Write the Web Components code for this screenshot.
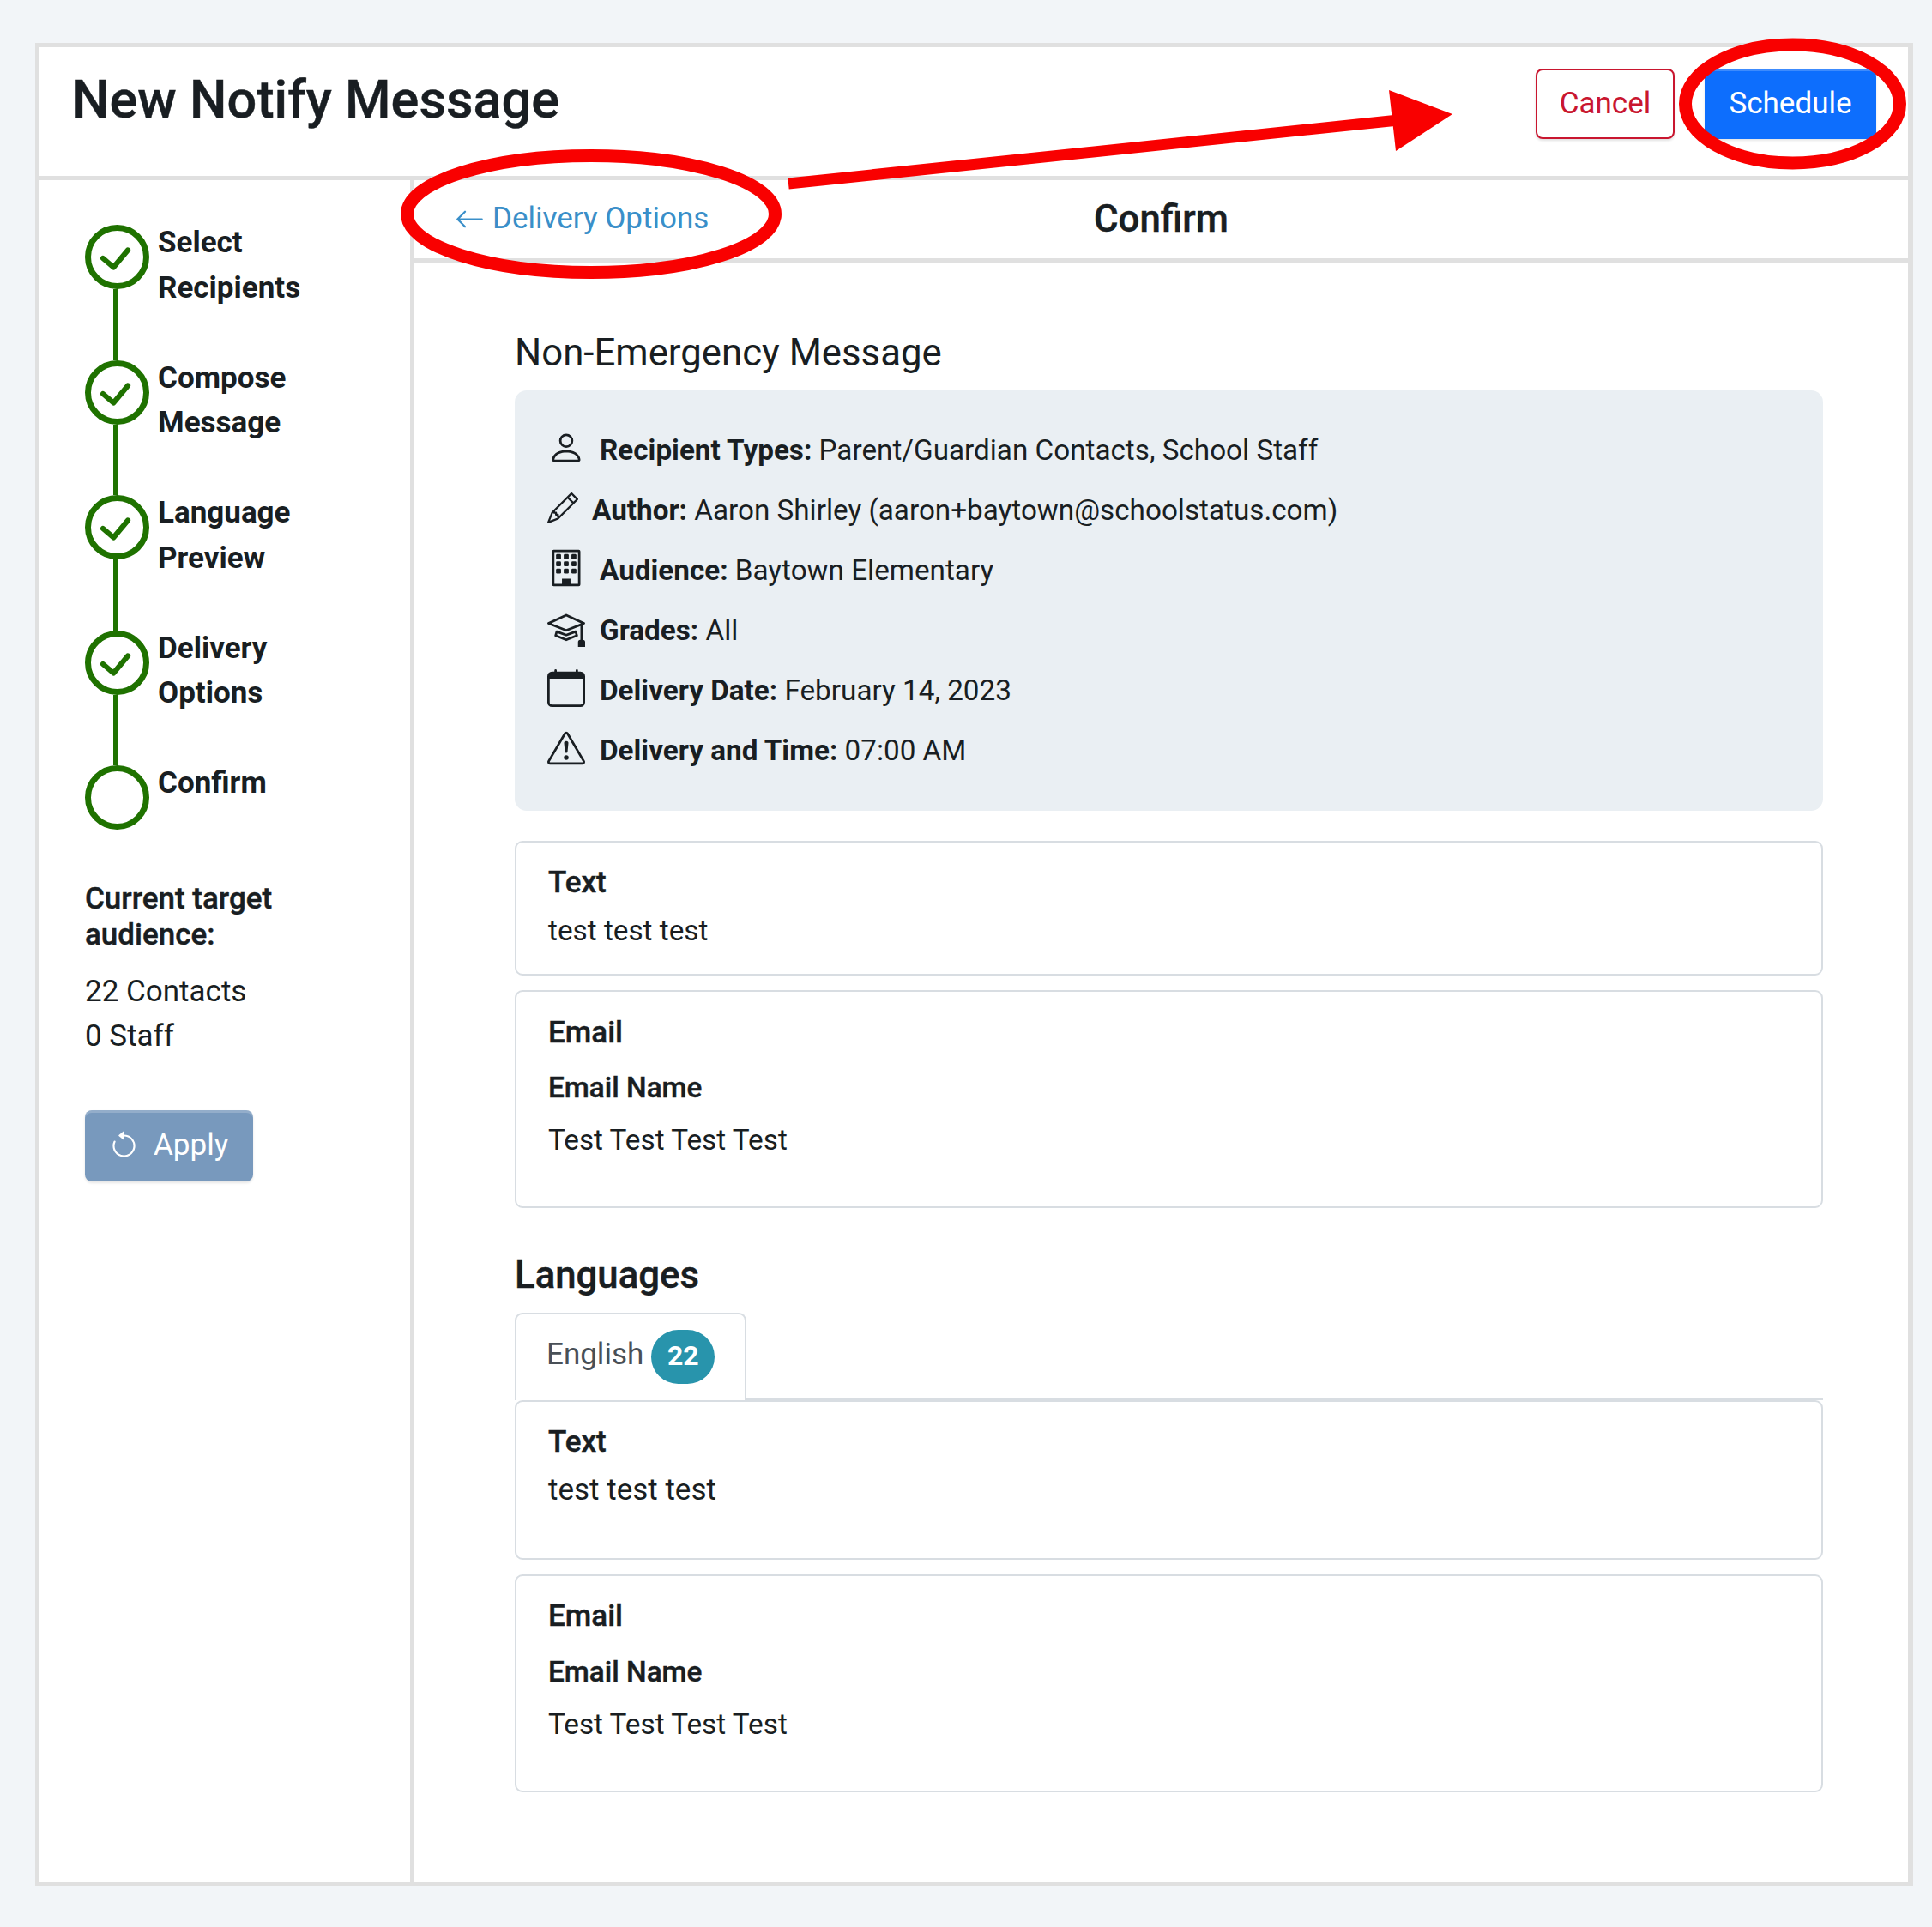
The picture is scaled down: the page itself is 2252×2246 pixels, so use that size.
<!DOCTYPE html>
<html lang="en"><head><meta charset="utf-8"><title>New Notify Message</title>
<style>
html,body{margin:0;padding:0;background:#f2f5f8;}
body{font-family:Roboto,"Liberation Sans",sans-serif;font-size:35px;line-height:52.5px;color:#191e22;}
</style></head><body>
<nm-app>
  <nm-header slot="header" heading="New Notify Message"></nm-header>
  <nm-sidebar slot="sidebar">
    <nm-step done>Select<br>Recipients</nm-step>
    <nm-step done>Compose<br>Message</nm-step>
    <nm-step done>Language<br>Preview</nm-step>
    <nm-step done>Delivery<br>Options</nm-step>
    <nm-step last>Confirm</nm-step>
  </nm-sidebar>
  <nm-subheader slot="sub" back="Delivery Options" heading="Confirm"></nm-subheader>
  <nm-content slot="content">
    <nm-title>Non-Emergency Message</nm-title>
    <nm-info>
      <nm-row icon="person"><b>Recipient Types:</b> Parent/Guardian Contacts, School Staff</nm-row>
      <nm-row icon="pencil"><b>Author:</b> Aaron Shirley (aaron+baytown@schoolstatus.com)</nm-row>
      <nm-row icon="building"><b>Audience:</b> Baytown Elementary</nm-row>
      <nm-row icon="grad"><b>Grades:</b> All</nm-row>
      <nm-row icon="calendar"><b>Delivery Date:</b> February 14, 2023</nm-row>
      <nm-row icon="warn"><b>Delivery and Time:</b> 07:00 AM</nm-row>
    </nm-info>
    <nm-card kind="text" small heading="Text" body="test test test" h="157" pad="21"></nm-card>
    <nm-card kind="email" heading="Email" name="Email Name" body="Test Test Test Test" h="254" gap="12" pad="21.500"></nm-card>
    <nm-langs></nm-langs>
    <nm-card kind="text" heading="Text" body="test test test" h="186" pad="21"></nm-card>
    <nm-card kind="email" heading="Email" name="Email Name" body="Test Test Test Test" h="254" gap="13" pad="20.500"></nm-card>
  </nm-content>
  <nm-annotations slot="overlay"></nm-annotations>
</nm-app>
<script>
const ICONS={
person:'<path d="M8 8a3 3 0 1 0 0-6 3 3 0 0 0 0 6Zm2-3a2 2 0 1 1-4 0 2 2 0 0 1 4 0Zm4 8c0 1-1 1-1 1H3s-1 0-1-1 1-4 6-4 6 3 6 4Zm-1-.004c-.001-.246-.154-.986-.832-1.664C11.516 10.68 10.289 10 8 10c-2.29 0-3.516.68-4.168 1.332-.678.678-.83 1.418-.832 1.664h10Z"/>',
pencil:'<path d="M12.146.146a.5.5 0 0 1 .708 0l3 3a.5.5 0 0 1 0 .708l-10 10a.5.5 0 0 1-.168.11l-5 2a.5.5 0 0 1-.65-.65l2-5a.5.5 0 0 1 .11-.168l10-10zM11.207 2.5 13.5 4.793 14.793 3.5 12.5 1.207 11.207 2.5zm1.586 3L10.5 3.207 4 9.707V10h.5a.5.5 0 0 1 .5.5v.5h.5a.5.5 0 0 1 .5.5v.5h.293l6.5-6.5zm-9.761 5.175-.106.106-1.528 3.821 3.821-1.528.106-.106A.5.5 0 0 1 5 12.5V12h-.5a.5.5 0 0 1-.5-.5V11h-.5a.5.5 0 0 1-.468-.325z"/>',
building:'<path fill-rule="evenodd" d="M2.700.3h10.600a.7.7 0 0 1 .7.7v14a.7.7 0 0 1-.7.7H2.700a.7.7 0 0 1-.7-.7V1a.7.7 0 0 1 .7-.7ZM3 1.300V14.700h3.200v-2.200h3.600v2.200H13V1.300Z"/><rect x="3.700" y="2.100" width="2.100" height="2.100" rx=".5"/><rect x="6.950" y="2.100" width="2.100" height="2.100" rx=".5"/><rect x="10.200" y="2.100" width="2.100" height="2.100" rx=".5"/><rect x="3.700" y="5.200" width="2.100" height="2.100" rx=".5"/><rect x="6.950" y="5.200" width="2.100" height="2.100" rx=".5"/><rect x="10.200" y="5.200" width="2.100" height="2.100" rx=".5"/><rect x="3.700" y="8.300" width="2.100" height="2.100" rx=".5"/><rect x="6.950" y="8.300" width="2.100" height="2.100" rx=".5"/><rect x="10.200" y="8.300" width="2.100" height="2.100" rx=".5"/>',
grad:'<path d="M8.211 2.047a.5.5 0 0 0-.422 0l-7.500 3.500a.5.5 0 0 0 .025.917l7.500 3a.5.5 0 0 0 .372 0L14 7.140V13a1 1 0 0 0-1 1v2h3v-2a1 1 0 0 0-1-1V6.739l.686-.275a.5.5 0 0 0 .025-.917l-7.500-3.500ZM8 8.460 1.758 5.965 8 3.052l6.242 2.913L8 8.460Z"/><path d="M4.176 9.032a.5.5 0 0 0-.656.327l-.5 1.700a.5.5 0 0 0 .294.605l4.500 1.800a.5.5 0 0 0 .372 0l4.500-1.800a.5.5 0 0 0 .294-.605l-.5-1.700a.5.5 0 0 0-.656-.327L8 10.466 4.176 9.032Zm-.068 1.873.22-.748 3.496 1.311a.5.5 0 0 0 .352 0l3.496-1.311.22.748L8 12.460l-3.892-1.556Z"/>',
calendar:'<path d="M3.500 0a.5.5 0 0 1 .5.5V1h8V.5a.5.5 0 0 1 1 0V1h1a2 2 0 0 1 2 2v11a2 2 0 0 1-2 2H2a2 2 0 0 1-2-2V3a2 2 0 0 1 2-2h1V.5a.5.5 0 0 1 .5-.5zM1 4v10a1 1 0 0 0 1 1h12a1 1 0 0 0 1-1V4H1z"/>',
warn:'<path d="M7.938 2.016A.13.13 0 0 1 8.002 2a.13.13 0 0 1 .063.016.146.146 0 0 1 .054.057l6.857 11.667c.036.06.035.124.002.183a.163.163 0 0 1-.054.06.116.116 0 0 1-.066.017H1.146a.115.115 0 0 1-.066-.017.163.163 0 0 1-.054-.06.176.176 0 0 1 .002-.183L7.884 2.073a.147.147 0 0 1 .054-.057zm1.044-.45a1.130 1.130 0 0 0-1.960 0L.165 13.233c-.457.778.091 1.767.98 1.767h13.713c.889 0 1.438-.99.98-1.767L8.982 1.566z"/><path d="M7.002 12a1 1 0 1 1 2 0 1 1 0 0 1-2 0zM7.100 5.995a.905.905 0 1 1 1.800 0l-.35 3.507a.552.552 0 0 1-1.100 0L7.100 5.995z"/>',
back:'<path fill-rule="evenodd" d="M15 8a.5.5 0 0 0-.5-.5H2.707l3.147-3.146a.5.5 0 1 0-.708-.708l-4 4a.5.5 0 0 0 0 .708l4 4a.5.5 0 0 0 .708-.708L2.707 8.500H14.500A.5.5 0 0 0 15 8z"/>',
undo:'<path fill-rule="evenodd" d="M8 3a5 5 0 1 1-4.546 2.914.5.5 0 0 0-.908-.417A6 6 0 1 0 8 2v1z"/><path d="M8 4.466V.534a.25.25 0 0 0-.41-.192L5.230 2.308a.25.25 0 0 0 0 .384l2.360 1.966A.25.25 0 0 0 8 4.466z"/>'
};
const svg=(n,s,c)=>`<svg xmlns="http://www.w3.org/2000/svg" width="${s}" height="${s}" viewBox="0 0 16 16" fill="${c||'currentColor'}">${ICONS[n]}</svg>`;
function def(name,render){
  customElements.define(name,class extends HTMLElement{
    constructor(){super();this.attachShadow({mode:'open'});}
    connectedCallback(){this.shadowRoot.innerHTML=render(this);}
  });
}
const HEAVY='-webkit-text-stroke:.45px currentColor;';
def('nm-app',()=>`<style>
:host{display:block;position:relative;box-sizing:border-box;height:2148px;margin:50px 22px 48px 41px;border:5px solid #e0e0e0;border-right-width:6px;background:#fff;}
.wrap{display:grid;grid-template-columns:432px 5px 1fr;grid-template-rows:150px 5px 1fr;height:100%;}
.head{grid-column:1/4;}
.hr{grid-column:1/4;background:#e0e0e0;}
.side{min-width:0;}
.vr{background:#e0e0e0;}
.main{display:flex;flex-direction:column;min-width:0;}
</style><div class="wrap"><div class="head"><slot name="header"></slot></div><div class="hr"></div>
<div class="side"><slot name="sidebar"></slot></div><div class="vr"></div>
<div class="main"><slot name="sub"></slot><slot name="content"></slot></div></div><slot name="overlay"></slot>`);
def('nm-header',el=>`<style>
:host{display:flex;height:150px;align-items:flex-start;justify-content:space-between;padding:0 37px 0 38px;box-sizing:border-box;}
h1{margin:25px 0 0;font:500 61.250px/73.500px Roboto,sans-serif;color:#191e22;${HEAVY}}
.btns{display:flex;gap:35px;margin-top:25px;}
.b{box-sizing:border-box;height:82px;display:flex;align-items:center;justify-content:center;border-radius:8px;font-size:35px;padding-top:1px;}
.c{width:162px;border:2px solid #c9162f;color:#c9162f;background:#fff;box-shadow:0 2px 3px rgba(0,0,0,.12);}
.s{width:200px;color:#fff;background:#0d6efd;box-shadow:inset 0 3px 0 rgba(255,255,255,.2),0 2px 3px rgba(0,0,0,.1);}
</style><h1>${el.getAttribute('heading')}</h1><div class="btns"><div class="b c">Cancel</div><div class="b s">Schedule</div></div>`);
def('nm-sidebar',()=>`<style>
:host{display:block;padding:52px 0 0 53px;}
.t{margin:59px 0 0;font-weight:500;font-size:35px;line-height:41.500px;width:300px;${HEAVY}}
.n{margin:20px 0 0;line-height:52px;}
.a{box-sizing:border-box;margin-top:60px;width:196px;height:83px;border-radius:8px;background:#7899bd;color:#fff;display:flex;align-items:center;gap:17px;padding-left:28px;box-shadow:inset 0 3px 0 rgba(255,255,255,.2),0 2px 3px rgba(0,0,0,.1);}
svg{display:block;}
</style><slot></slot><div class="t">Current target audience:</div><div class="n">22 Contacts<br>0 Staff</div><div class="a">${svg('undo',35)}<span>Apply</span></div>`);
def('nm-step',el=>{const last=el.hasAttribute('last'),done=el.hasAttribute('done');return `<style>
:host{display:flex;height:${last?'76px':'157.500px'};}
.col{width:75px;display:flex;flex-direction:column;flex:none;}
.dot{box-sizing:border-box;width:75px;height:75px;border:7px solid #1f7200;border-radius:50%;flex:none;}
.dot svg{display:block;}
.ln{width:5px;margin-left:32.500px;flex:1;background:#1f7200;}
.tx{margin:-5px 0 0 10px;font-weight:700;color:#191e22;}
</style><div class="col"><div class="dot">${done?'<svg width="61" height="61" viewBox="0 0 61 61"><path d="M14 32 L26.300 42.500 L43 22.500" fill="none" stroke="#1f7200" stroke-width="6.200" stroke-linecap="round" stroke-linejoin="round"/></svg>':''}</div>${last?'':'<div class="ln"></div>'}</div><div class="tx"><slot></slot></div>`;});
def('nm-subheader',el=>`<style>
:host{display:grid;grid-template-columns:1fr auto 1fr;align-items:center;height:91px;border-bottom:5px solid #e0e0e0;}
.b{display:flex;align-items:center;gap:9px;padding-left:47px;color:#3a8fc9;}
h2{margin:-2px 0 0;font:500 43.750px/50px Roboto,sans-serif;color:#191e22;${HEAVY}}
svg{display:block;}
</style><div class="b">${svg('back',35)}<span>${el.getAttribute('back')}</span></div><h2>${el.getAttribute('heading')}</h2><div></div>`);
def('nm-content',()=>`<style>:host{display:block;padding:0 99px 0 117px;}</style><slot></slot>`);
def('nm-title',()=>`<style>:host{display:block;margin:80px 0 0;font:400 43.750px/50px Roboto,sans-serif;height:69px;}</style><slot></slot>`);
def('nm-info',()=>`<style>:host{display:flex;flex-direction:column;gap:17.500px;box-sizing:border-box;height:490px;padding:44px 38px 35px;background:#eaeff3;border-radius:14px;margin-bottom:35px;font-size:33.250px;}</style><slot></slot>`);
def('nm-row',el=>{const i=el.getAttribute('icon');const p=i==='pencil';return `<style>
:host{display:flex;align-items:center;height:52.500px;white-space:pre-wrap;}
.i{flex:none;width:${p?36:44}px;height:44px;margin:0 ${p?16:17}px 6px 0;display:flex;align-items:center;}
svg{display:block;}
::slotted(b){font-weight:700;}
</style><div class="i">${svg(i,p?36:44)}</div><div><slot></slot></div>`;});
def('nm-card',el=>{const a=n=>el.getAttribute(n);const em=a('kind')==='email';const s=el.hasAttribute('small');return `<style>
:host{display:block;box-sizing:border-box;height:${a('h')}px;border:2px solid #d8dde2;border-radius:9px;padding:${a('pad')}px 37px 0;margin-bottom:17px;font-size:${s?'33.300px':'35px'};}
.h{font-weight:500;font-size:35px;${HEAVY}}
.n{font-weight:500;font-size:33.300px;margin-top:${a('gap')||0}px;${HEAVY}}
.g{margin-top:${em?'8px':'3px'};${em?'font-size:33.300px;':''}}
</style><div class="h">${a('heading')}</div>${em?`<div class="n">${a('name')}</div>`:''}<div class="g">${a('body')}</div>`;});
def('nm-langs',()=>`<style>
:host{display:block;margin-top:53px;}
h3{margin:0;font:500 43.750px/50px Roboto,sans-serif;height:69px;${HEAVY}}
.tabs{display:flex;height:102px;box-sizing:border-box;border-bottom:2px solid #d8dde2;}
.tab{box-sizing:border-box;width:270px;height:102px;border:2px solid #d8dde2;border-bottom:0;border-radius:9px 9px 0 0;background:#fff;display:flex;align-items:center;padding:0 0 0 35px;gap:9px;color:#495057;}
.e{margin-top:-5px;}
.bd{display:flex;align-items:center;justify-content:center;width:74px;height:63px;margin-top:-2px;border-radius:32px;background:#2894ac;color:#fff;font-weight:700;font-size:32px;padding-bottom:2px;box-sizing:border-box;}
</style><h3>Languages</h3><div class="tabs"><div class="tab"><span class="e">English</span><span class="bd">22</span></div></div>`);
def('nm-annotations',()=>`<style>:host{position:absolute;left:-46px;top:-55px;width:2252px;height:2246px;pointer-events:none;display:block;}svg{display:block;}</style>
<svg width="2252" height="2246" viewBox="0 0 2252 2246">
<g fill="none" stroke="#f90000" stroke-width="15"><ellipse cx="689" cy="249.500" rx="214.500" ry="68"/><ellipse cx="2089.500" cy="121" rx="125" ry="69"/></g>
<line x1="919" y1="214" x2="1630" y2="140" stroke="#f90000" stroke-width="13"/>
<polygon points="1619,105 1693,133 1627,176" fill="#f90000"/></svg>`);
</script></body></html>
